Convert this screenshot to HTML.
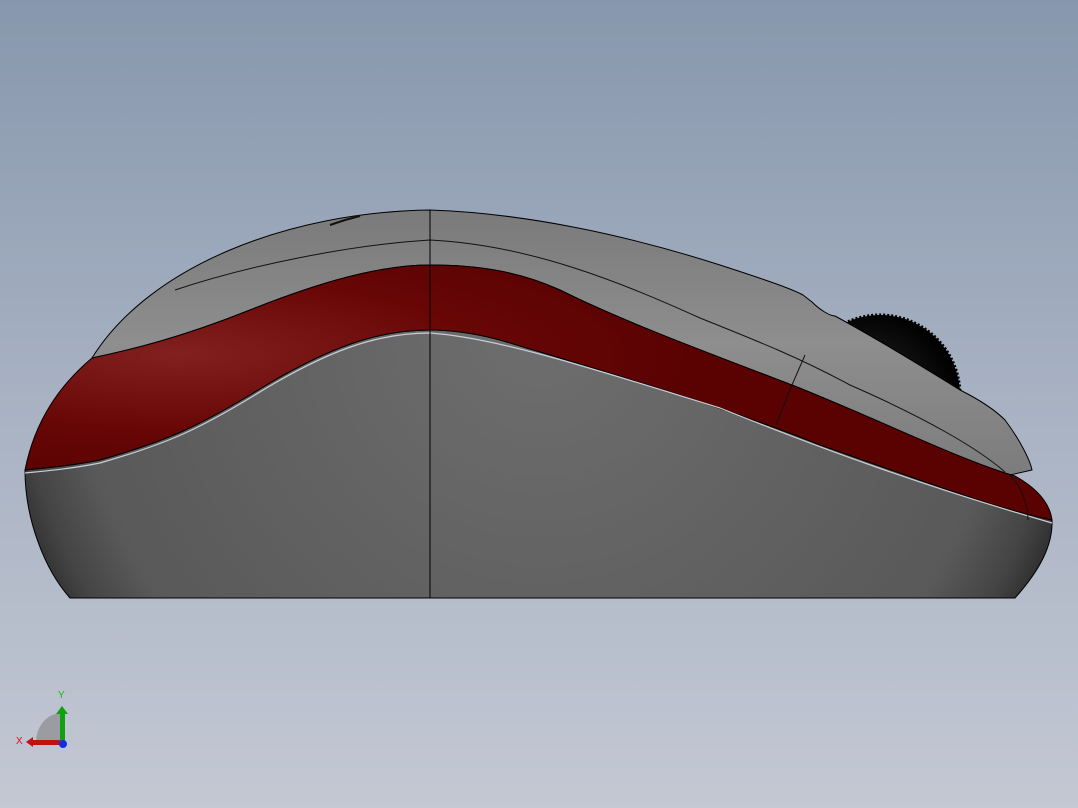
<!DOCTYPE html>
<html><head><style>
html,body{margin:0;padding:0;width:1078px;height:808px;overflow:hidden}
body{background:linear-gradient(#8797ad 0%,#a8b2c3 50%,#c3c8d3 100%)}
svg{position:absolute;left:0;top:0}
</style></head><body>
<svg width="1078" height="808" viewBox="0 0 1078 808" xmlns="http://www.w3.org/2000/svg">
<defs>
<radialGradient id="wheel" cx="0.4" cy="0.55" r="0.6"><stop offset="0" stop-color="#666"/><stop offset="0.6" stop-color="#111"/><stop offset="1" stop-color="#000"/></radialGradient>
<linearGradient id="shell" x1="0" y1="0" x2="0" y2="1"><stop offset="0" stop-color="#7a7a7a"/><stop offset="0.5" stop-color="#8e8e8e"/><stop offset="1" stop-color="#7c7c7c"/></linearGradient>
<radialGradient id="lower" gradientUnits="userSpaceOnUse" cx="540" cy="330" r="570"><stop offset="0" stop-color="#6e6e6e"/><stop offset="0.82" stop-color="#595959"/><stop offset="0.92" stop-color="#444"/><stop offset="1" stop-color="#242424"/></radialGradient>
<radialGradient id="red" cx="0.15" cy="0.35" r="0.5"><stop offset="0" stop-color="#82201f"/><stop offset="0.6" stop-color="#680606"/><stop offset="1" stop-color="#5a0202"/></radialGradient>
</defs>
<circle cx="880" cy="395" r="80" fill="url(#wheel)" stroke="#000" stroke-width="3" stroke-dasharray="2 2"/>
<path d="M25,470 C25,520 45,570 70,598 L1015,598 C1040,570 1053,545 1052,520 C1000,510 920,480 820,445 C720,405 600,370 500,340 C470,332 445,330 430,330 C380,330 330,345 250,395 C200,425 170,440 100,460 C70,466 45,468 25,470 Z" fill="url(#lower)" stroke="#000" stroke-width="1"/>
<path d="M92,358 C150,265 290,212 430,210 C520,213 620,233 720,265 C760,278 790,288 803,295 L812,302 C820,310 830,316 835,316 C870,335 920,365 960,390 C980,400 995,410 1005,420 C1020,440 1030,460 1032,470 L1010,475 C960,460 880,420 792,385 C700,350 620,320 560,290 C520,272 480,265 430,265 C380,265 320,282 250,310 C180,338 130,350 92,358 Z" fill="url(#shell)" stroke="#000" stroke-width="1"/>
<path d="M92,358 C130,350 180,338 250,310 C320,282 380,265 430,265 C480,265 520,272 560,290 C620,320 700,350 792,385 C880,420 960,460 1015,476 C1040,490 1050,505 1052,520 C1000,510 920,480 820,445 C720,405 600,370 500,340 C470,332 445,330 430,330 C380,330 330,345 250,395 C200,425 170,440 100,460 C70,466 45,468 25,470 C35,420 60,385 92,358 Z" fill="url(#red)" stroke="#000" stroke-width="1"/>
<path d="M25,470 C45,468 70,466 100,460 C170,440 200,425 250,395 C330,345 380,330 430,330 C500,335 600,368 720,405 C820,445 920,482 1052,520" fill="none" stroke="#c9ced6" stroke-width="1.2" transform="translate(0,3)"/>
<path d="M175,290 C250,265 350,245 430,240 C530,245 620,282 700,318 C760,342 800,358 850,385 C930,420 980,450 1005,472" fill="none" stroke="#111" stroke-width="1"/>
<path d="M805,355 L792,385 L776,425" fill="none" stroke="#111" stroke-width="1"/>
<path d="M1010,475 C1022,488 1028,505 1028,520" fill="none" stroke="#111" stroke-width="1"/>
<line x1="430" y1="210" x2="430" y2="598" stroke="#000" stroke-width="1"/>
<path d="M330,225 L345,220 L360,216" stroke="#111" stroke-width="2" fill="none"/>
<path d="M36,743 C36,725 48,713 62,713 L62,743 Z" fill="#9a9ca2"/>
<rect x="30" y="740" width="33" height="5" fill="#c01010"/>
<path d="M26,742 L33,737 L33,747 Z" fill="#c01010"/>
<rect x="60" y="713" width="5" height="30" fill="#10a010"/>
<path d="M62,706 L56,714 L68,714 Z" fill="#10a010"/>
<circle cx="63" cy="744" r="4" fill="#1030e0"/>
<text x="58" y="698" font-family="Liberation Sans,sans-serif" font-size="10" fill="#10c010">Y</text>
<text x="16" y="744" font-family="Liberation Sans,sans-serif" font-size="10" fill="#e01010">X</text>
</svg>
</body></html>
